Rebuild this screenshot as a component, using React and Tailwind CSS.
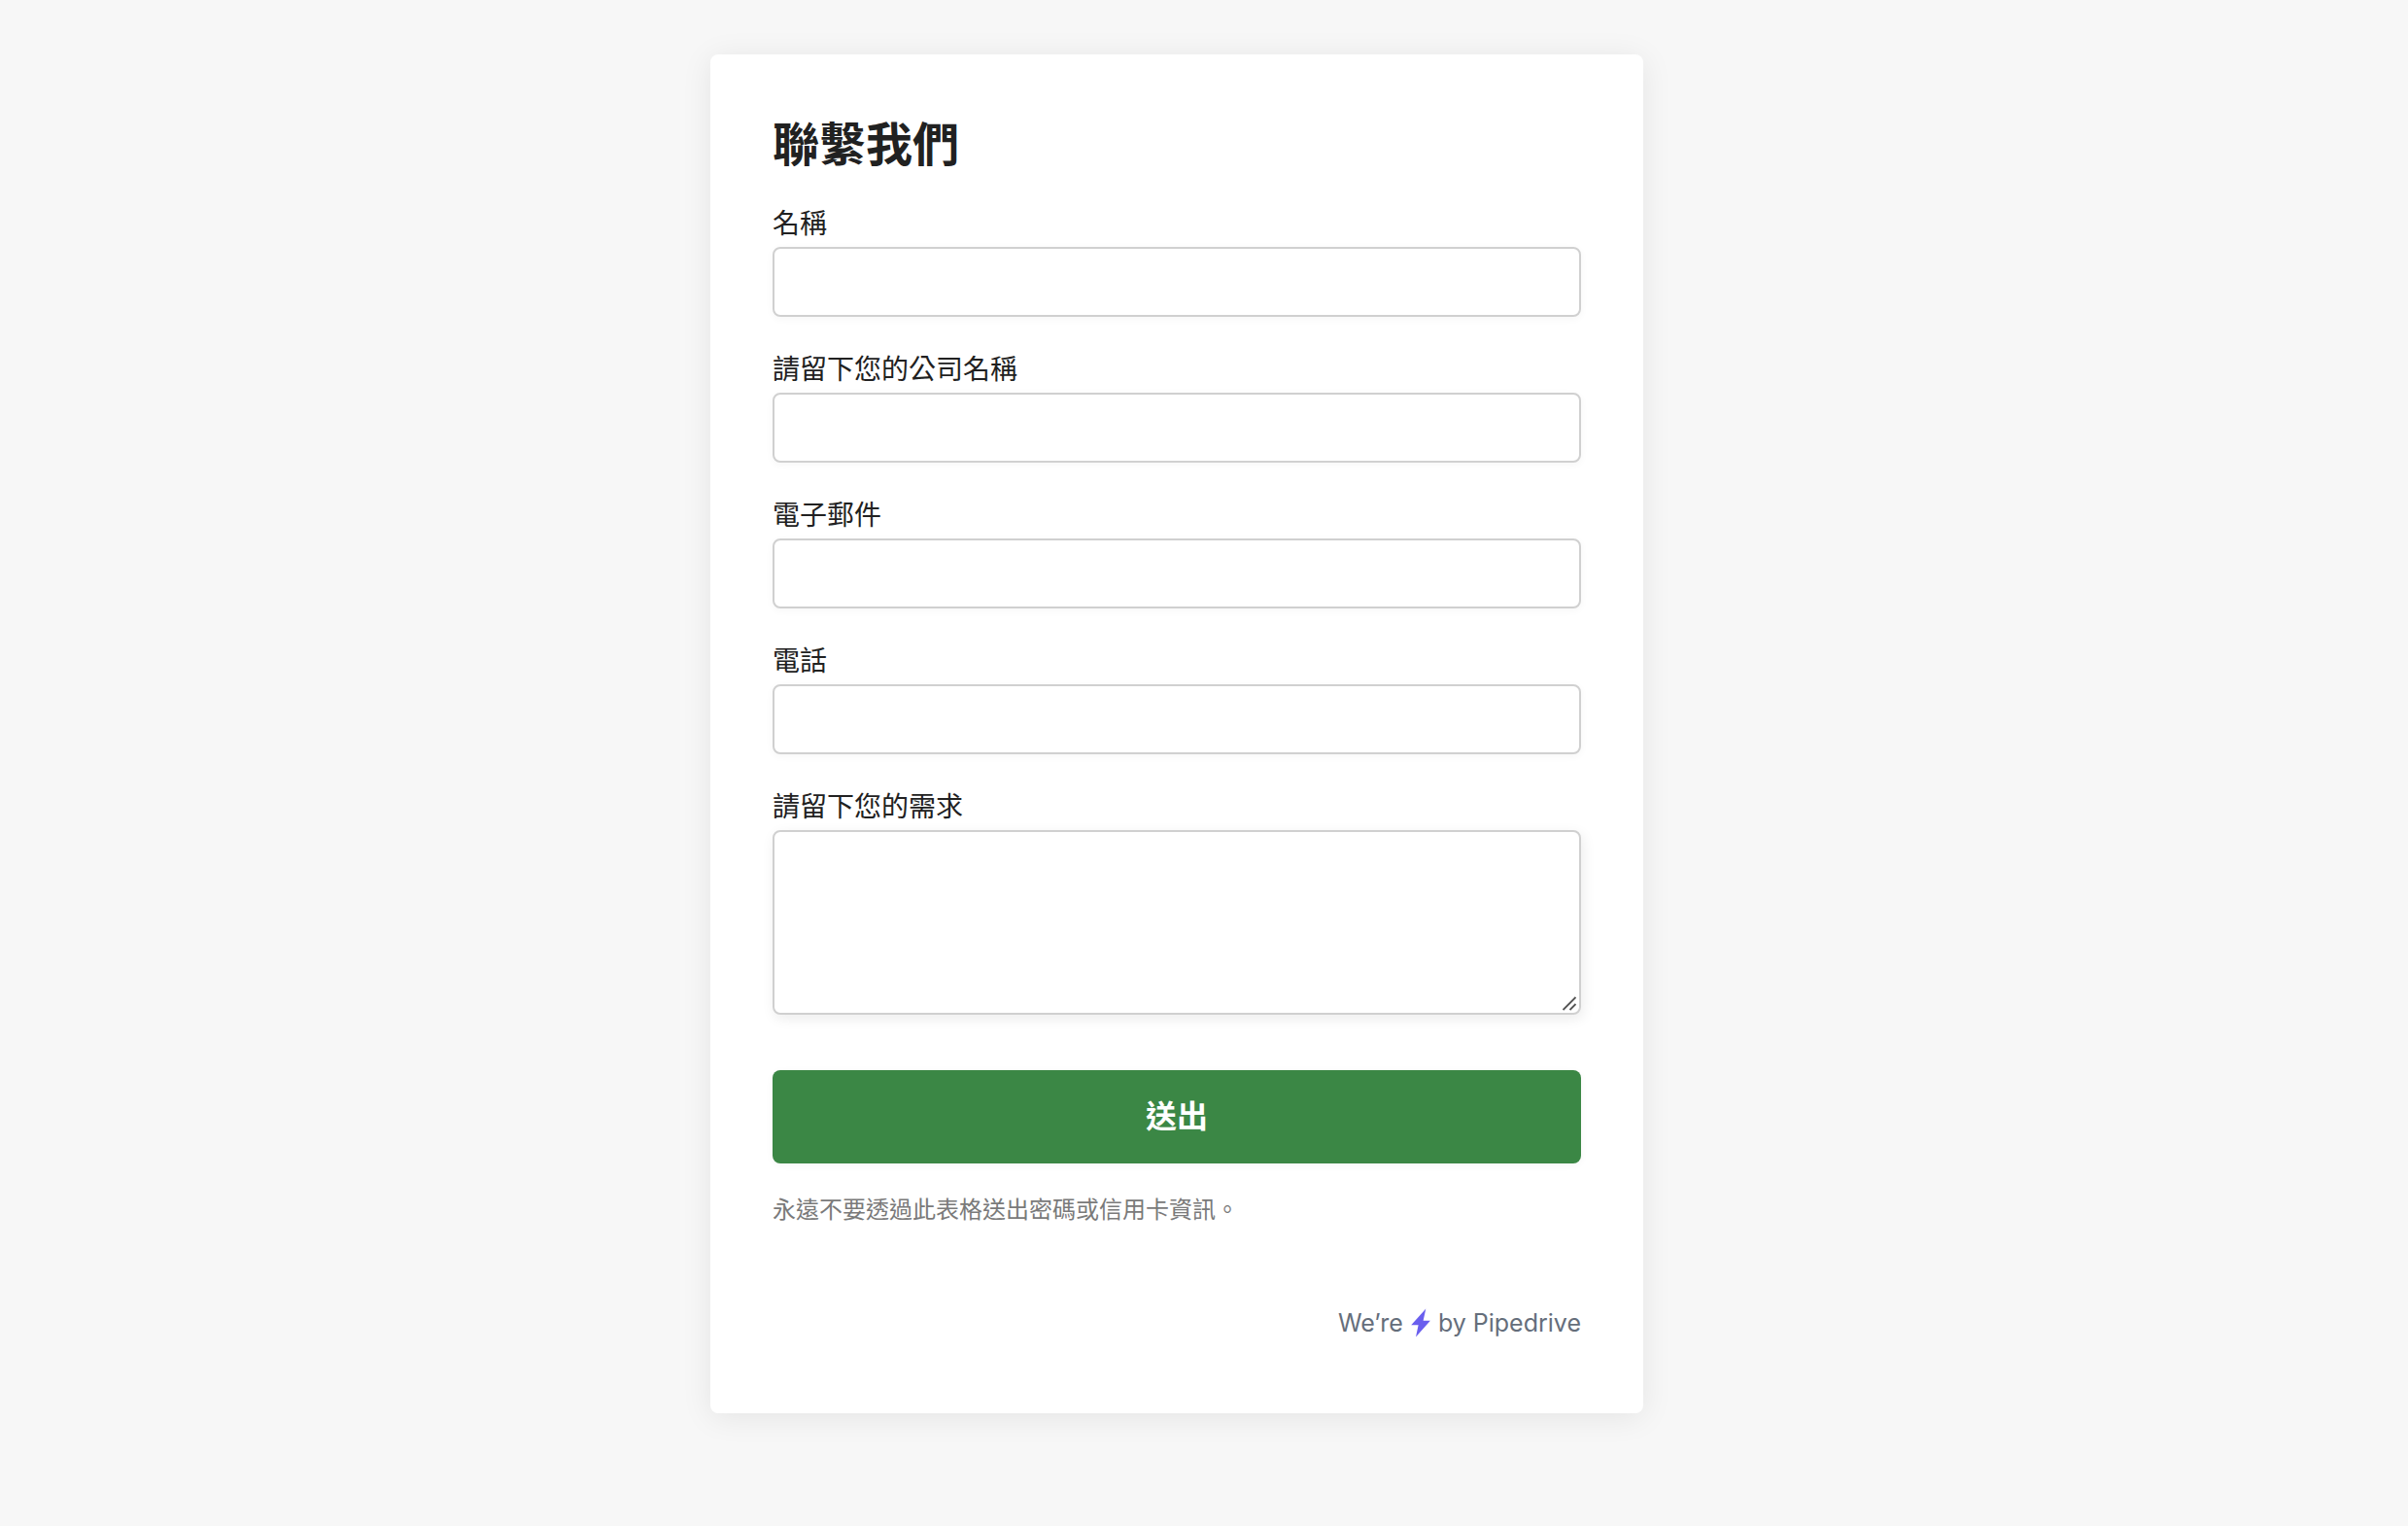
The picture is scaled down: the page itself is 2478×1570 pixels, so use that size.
const fields = [
  { id: "name", label: "名稱", type: "text" },
  { id: "company", label: "請留下您的公司名稱", type: "text" },
  { id: "email", label: "電子郵件", type: "email" },
  { id: "phone", label: "電話", type: "tel" },
];

function BoltIcon() {
  return (
    <svg className="w-5 h-[30px] shrink-0" viewBox="0 0 20 30" fill="#6a5fee" aria-hidden="true">
      <path d="M15.3 0.5 L0.2 17.2 H7.6 L5 29.5 L19.9 12.7 H12.6 Z" />
    </svg>
  );
}

// resize handle, drawn over the textarea corner
function Grip() {
  return (
    <svg
      className="absolute right-1 bottom-1 w-4 h-4 pointer-events-none"
      viewBox="0 0 16 16"
      fill="none"
      stroke="#555"
      strokeWidth="1.8"
      aria-hidden="true"
    >
      <path d="M1.5 15 L14.5 2 M8.5 15 L14.5 9" />
    </svg>
  );
}

export default function App() {
  return (
    <div className="min-h-screen bg-[#f7f7f7] pl-6 pr-20 pt-14 pb-14 text-[#212121] font-['Inter','Noto_Sans_CJK_TC',sans-serif]">
      <main className="max-w-[960px] mx-auto bg-white rounded-lg shadow-[0_4px_32px_rgba(0,0,0,0.08)] px-16 pt-16 pb-[73px]">
        <h1 className="text-5xl leading-[58px] font-bold">聯繫我們</h1>
        <form className="mt-8 flex flex-col gap-[34px]" onSubmit={(e) => e.preventDefault()}>
          {fields.map((field) => (
            <div key={field.id}>
              <label htmlFor={field.id} className="block text-[28px] leading-[40px] mb-1">
                {field.label}
              </label>
              <input
                id={field.id}
                type={field.type}
                className="block w-full h-18 px-4 text-[28px] bg-white border-2 border-[#d0d0d0] rounded-lg shadow-[0_2px_8px_rgba(0,0,0,0.04)]"
              />
            </div>
          ))}
          <div>
            <label htmlFor="needs" className="block text-[28px] leading-[40px] mb-1">
              請留下您的需求
            </label>
            <div className="relative">
              <textarea
                id="needs"
                className="block w-full h-[190px] px-4 text-[28px] bg-white border-2 border-[#d0d0d0] rounded-lg shadow-[2px_4px_14px_rgba(0,0,0,0.08)] [&::-webkit-resizer]:hidden"
              />
              <Grip />
            </div>
          </div>
          <button
            type="submit"
            className="mt-[23px] w-full h-24 bg-[#3b8745] rounded-lg text-white text-[32px] font-bold shadow-[0_2px_8px_rgba(0,0,0,0.04)]"
          >
            送出
          </button>
        </form>
        <p className="mt-8 text-2xl leading-8 text-[#7a7a7a]">永遠不要透過此表格送出密碼或信用卡資訊。</p>
        <a
          href="#pipedrive"
          className="mt-20 flex justify-end items-center gap-2 text-[25px] leading-[40px] text-[#656e7b]"
        >
          We’re <BoltIcon /> by Pipedrive
        </a>
      </main>
    </div>
  );
}
